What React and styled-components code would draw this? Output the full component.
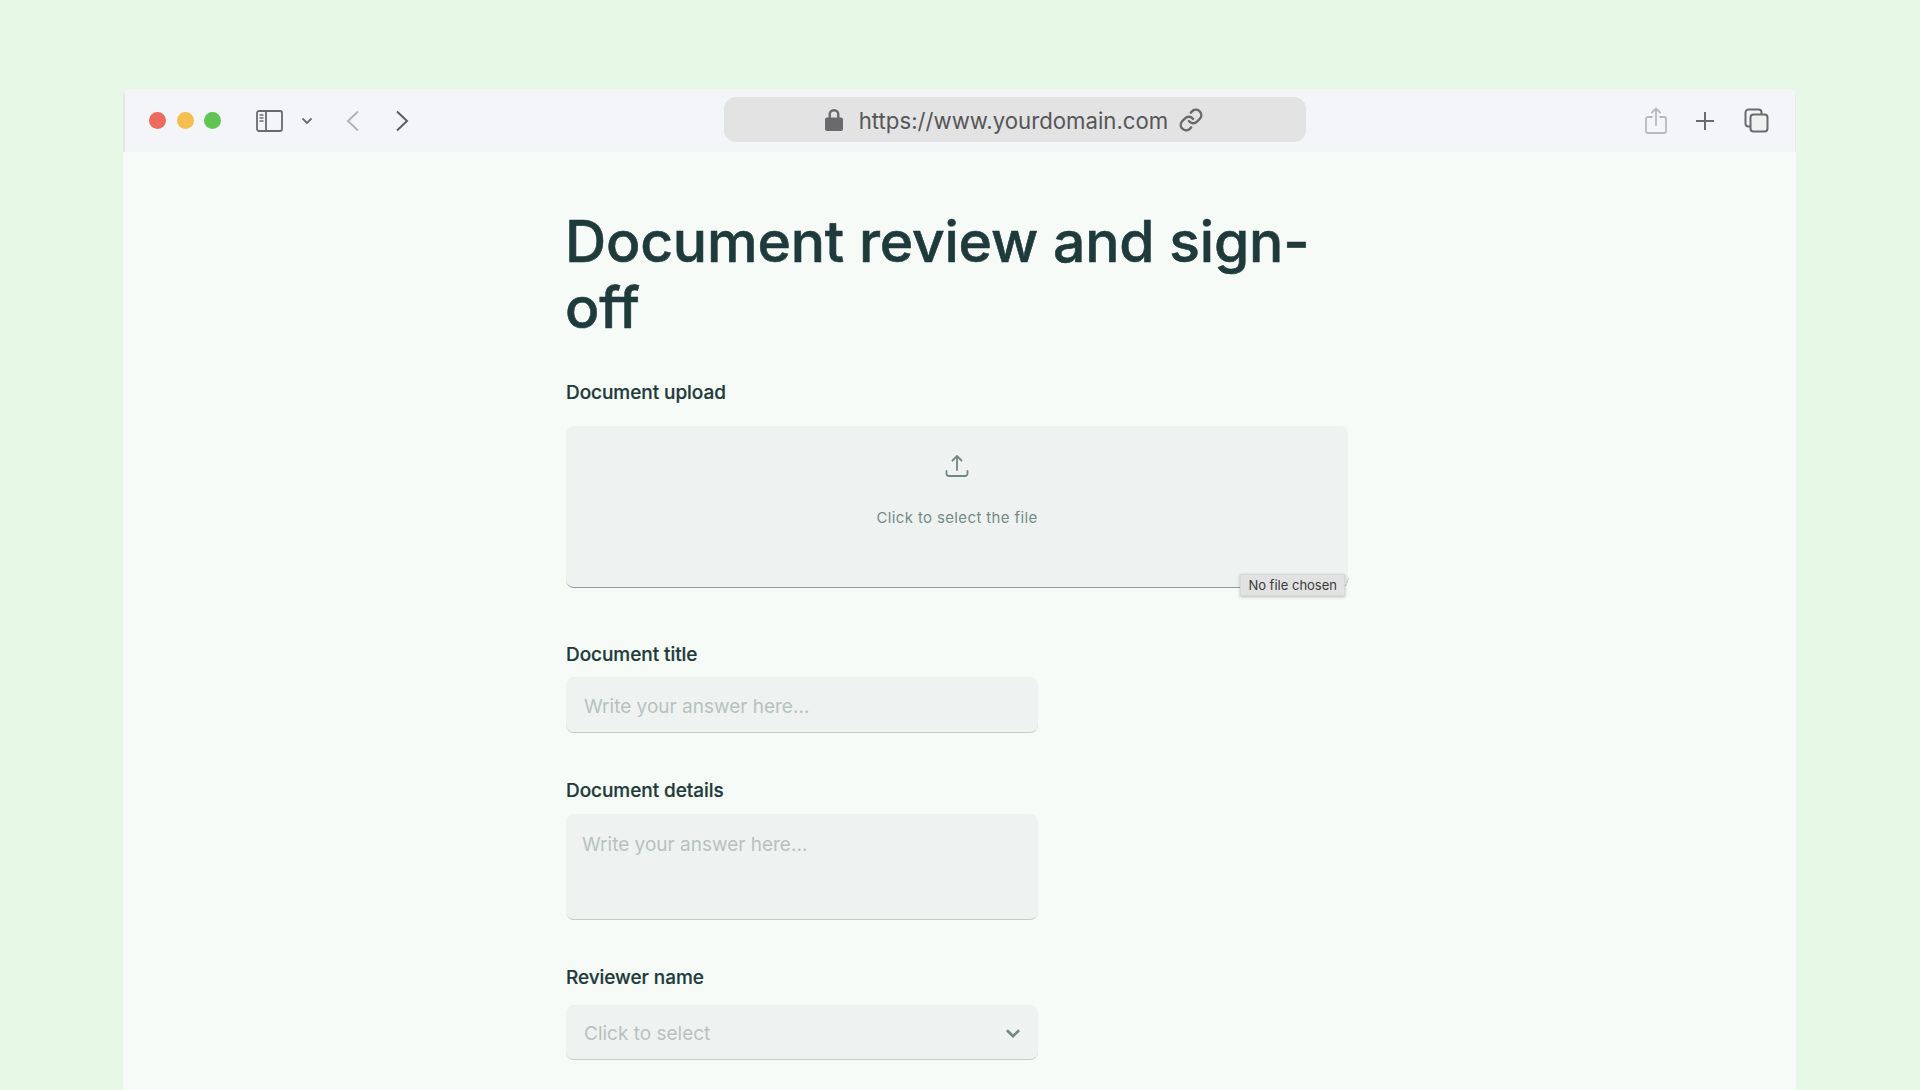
import React from 'react';
import styled, { createGlobalStyle } from 'styled-components';

const GlobalStyle = createGlobalStyle`
  html, body {
    margin: 0;
    height: 1090px;
    overflow: hidden;
    background: #e7f8e6;
    font-family: Inter, "Noto Sans", sans-serif;
  }
  * { box-sizing: border-box; }
`;

const Page = styled.div`
  height: 1090px;
  padding: 89px 124px 0 123px;
  overflow: hidden;
`;

const Browser = styled.div`
  height: 1001px;
  background: #f6fbf8;
  border-radius: 8px 8px 0 0;
  overflow: hidden;
`;

const Toolbar = styled.header`
  height: 63px;
  display: grid;
  grid-template-columns: 600px 581px 1fr;
  align-items: center;
  background: #f4f5f8;
  border-left: 2px solid #e3e6e8;
  border-right: 1px solid #e9ebed;
`;

const ToolbarLeft = styled.div`
  display: flex;
  align-items: center;
  padding-left: 24px;
`;

const Lights = styled.div`
  display: flex;
  gap: 10.5px;
  margin-right: 35px;
`;

const Light = styled.span`
  width: 17px;
  height: 17px;
  border-radius: 50%;
  background: ${(p) => p.$color};
`;

const ToolIcon = styled.svg`
  display: block;
  flex: none;
  margin-left: ${(p) => p.$left || 0}px;
  color: ${(p) => p.$color || '#6a6a6c'};
`;

const AddressBar = styled.div`
  height: 45px;
  margin: -2px 0 0 -1px;
  padding-right: 2px;
  display: flex;
  align-items: center;
  justify-content: center;
  background: #e3e3e3;
  border-radius: 12px;
  color: #565658;
  font-size: 22.2px;
`;

const AddressText = styled.span`
  margin: 3px 10px 0 15px;
  line-height: 28px;
`;

const ToolbarRight = styled.div`
  display: flex;
  align-items: center;
  justify-content: flex-end;
  padding-right: 26px;
`;

const Main = styled.main`
  width: 782px;
  margin-left: 443px;
  padding-top: 57px;
  color: #1e3a3a;
`;

const Title = styled.h1`
  margin: 0 0 37px -1px;
  font-size: 57px;
  line-height: 66px;
  font-weight: 500;
  letter-spacing: -0.2px;
  -webkit-text-stroke: 0.6px #1f3a3a;
  color: #1f3a3a;
`;

const Field = styled.div`
  margin-bottom: ${(p) => p.$bottom}px;
`;

const Label = styled.label`
  display: block;
  margin-bottom: ${(p) => p.$gap}px;
  padding-top: 1px;
  height: 28px;
  font-size: 19px;
  line-height: 28px;
  font-weight: 500;
  letter-spacing: -0.06px;
  -webkit-text-stroke: 0.2px #1f3a3a;
  color: #1f3a3a;
`;

const Upload = styled.div`
  position: relative;
  height: 162px;
  display: flex;
  flex-direction: column;
  align-items: center;
  padding-top: 27px;
  background: #eef2f0;
  border-bottom: 1.5px solid #8a9e9b;
  border-radius: 8px;

  &::after {
    content: '';
    position: absolute;
    right: 0;
    bottom: 4px;
    width: 1px;
    height: 5px;
    background: #c3c9c8;
    transform: rotate(30deg);
  }
`;

const UploadText = styled.span`
  margin-top: 29px;
  font-size: 15px;
  line-height: 20px;
  letter-spacing: 0.37px;
  color: #748b88;
`;

const FileTip = styled.span`
  position: absolute;
  right: 3px;
  bottom: -9px;
  height: 22px;
  padding: 0 7px;
  display: flex;
  align-items: center;
  font-size: 13px;
  color: #3a3a3a;
  background: #e2e2e2;
  border: 1px solid #d8d8d8;
  box-shadow: 0 1px 3px rgba(0, 0, 0, 0.25);
`;

const controlStyles = `
  display: block;
  width: 472px;
  border: 0;
  border-bottom: 1.5px solid #c2cdca;
  border-radius: 8px;
  background: #eef2f0;
  font-family: Inter, "Noto Sans", sans-serif;
  font-size: 19px;
  color: #1f3a3a;
  outline: none;
  &::placeholder { color: #b8c2bf; opacity: 1; }
`;

const TextInput = styled.input`
  ${controlStyles}
  height: 56px;
  padding: 3px 18px 0;
`;

const TextArea = styled.textarea`
  ${controlStyles}
  height: 106px;
  padding: 19px 16px 0;
  line-height: 24px;
  resize: none;
`;

const SelectBox = styled.div`
  ${controlStyles}
  height: 55px;
  padding: 3px 17px 0 18px;
  display: flex;
  align-items: center;
  justify-content: space-between;
  color: #b8c2bf;
`;

const App = () => (
  <Page>
    <GlobalStyle />
    <Browser>
      <Toolbar>
        <ToolbarLeft>
          <Lights>
            <Light $color="#ec6a5e" />
            <Light $color="#f4bf4f" />
            <Light $color="#61c554" />
          </Lights>
          <ToolIcon width="28" height="22" viewBox="0 0 28 22" fill="none" stroke="currentColor">
            <rect x="1" y="1" width="25" height="20" rx="2" strokeWidth="1.8" />
            <path d="M10 1v20" strokeWidth="1.8" />
            <path d="M3.5 5h4M3.5 8h4M3.5 11h4" strokeWidth="1.5" />
          </ToolIcon>
          <ToolIcon $left={17} width="12" height="8" viewBox="0 0 12 8" fill="none" stroke="currentColor" strokeWidth="1.8">
            <path d="M1.5 1.5 6 6l4.5-4.5" />
          </ToolIcon>
          <ToolIcon $left={33} $color="#b4b4b6" width="14" height="22" viewBox="0 0 14 22" fill="none" stroke="currentColor" strokeWidth="2">
            <path d="M12 1.5 2 11l10 9.5" />
          </ToolIcon>
          <ToolIcon $left={35} $color="#5e5e60" width="14" height="22" viewBox="0 0 14 22" fill="none" stroke="currentColor" strokeWidth="2">
            <path d="M2 1.5 12 11 2 20.5" />
          </ToolIcon>
        </ToolbarLeft>
        <AddressBar>
          <ToolIcon width="20" height="24" viewBox="0 0 20 24" fill="currentColor">
            <path d="M4.5 10V6.5a5.5 5.5 0 0 1 11 0V10h-2.4V6.5a3.1 3.1 0 0 0-6.2 0V10z" />
            <rect x="1" y="9.5" width="18" height="13.5" rx="2" />
          </ToolIcon>
          <AddressText>https://www.yourdomain.com</AddressText>
          <ToolIcon width="26" height="26" viewBox="0 0 24 24" fill="none" stroke="currentColor" strokeWidth="2.2" strokeLinecap="round" strokeLinejoin="round">
            <path d="M10 13a5 5 0 0 0 7.5.5l3-3a5 5 0 0 0-7-7l-1.7 1.7" />
            <path d="M14 11a5 5 0 0 0-7.5-.5l-3 3a5 5 0 0 0 7 7l1.7-1.7" />
          </ToolIcon>
        </AddressBar>
        <ToolbarRight>
          <ToolIcon $color="#b9b9bb" width="22" height="28" viewBox="0 0 22 28" fill="none" stroke="currentColor" strokeWidth="1.8" strokeLinecap="round" strokeLinejoin="round">
            <path d="M7 10H3a2 2 0 0 0-2 2v12a2 2 0 0 0 2 2h16a2 2 0 0 0 2-2V12a2 2 0 0 0-2-2h-4" />
            <path d="M11 18V2M7 5.5 11 1.5l4 4" />
          </ToolIcon>
          <ToolIcon $left={28} width="20" height="20" viewBox="0 0 20 20" fill="none" stroke="currentColor" strokeWidth="2">
            <path d="M10 1v18M1 10h18" />
          </ToolIcon>
          <ToolIcon $left={29} width="25" height="25" viewBox="0 0 25 25" fill="none" stroke="currentColor" strokeWidth="2">
            <path d="M6 18.5H4.5A3 3 0 0 1 1.5 15.5V4.5a3 3 0 0 1 3-3h10a3 3 0 0 1 3 3V6" />
            <rect x="6.5" y="6.5" width="17" height="17" rx="3" fill="#f0f0f1" />
          </ToolIcon>
        </ToolbarRight>
      </Toolbar>
      <Main>
        <Title>Document review and sign-off</Title>
        <Field $bottom={52}>
          <Label $gap={20}>Document upload</Label>
          <Upload>
            <svg width="26" height="26" viewBox="0 0 26 26" fill="none" stroke="#6f8986" strokeWidth="1.8" strokeLinecap="round" strokeLinejoin="round">
              <path d="M13 17V3M8.5 7.5 13 3l4.5 4.5" />
              <path d="M2.5 18v2.5a2.5 2.5 0 0 0 2.5 2.5h16a2.5 2.5 0 0 0 2.5-2.5V18" />
            </svg>
            <UploadText>Click to select the file</UploadText>
            <FileTip>No file chosen</FileTip>
          </Upload>
        </Field>
        <Field $bottom={43}>
          <Label $gap={9}>Document title</Label>
          <TextInput placeholder="Write your answer here..." readOnly />
        </Field>
        <Field $bottom={43}>
          <Label $gap={10}>Document details</Label>
          <TextArea placeholder="Write your answer here..." readOnly />
        </Field>
        <Field $bottom={0}>
          <Label $gap={14}>Reviewer name</Label>
          <SelectBox>
            Click to select
            <svg width="16" height="11" viewBox="0 0 14 10" fill="none" stroke="#6f8986" strokeWidth="2.4">
              <path d="M1.5 2 7 7.5 12.5 2" />
            </svg>
          </SelectBox>
        </Field>
      </Main>
    </Browser>
  </Page>
);

export default App;
